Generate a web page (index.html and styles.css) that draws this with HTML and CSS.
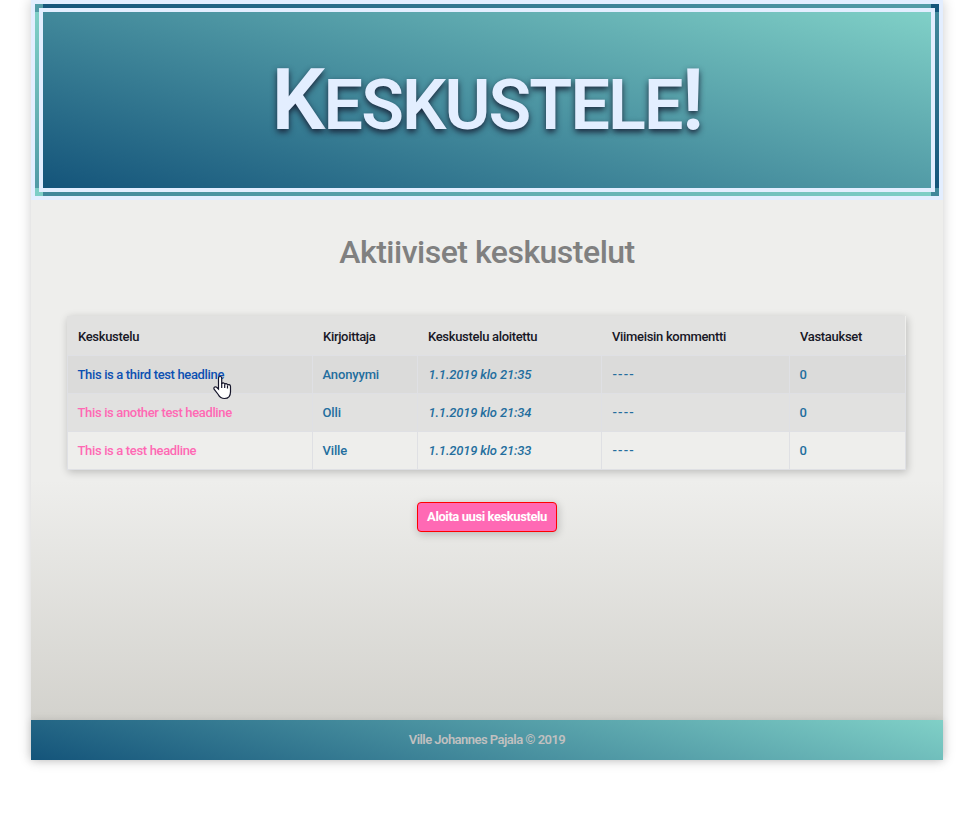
FILE: index.html
```html
<!DOCTYPE html>
<html lang="fi">
<head>
<meta charset="utf-8">
<title>Keskustele!</title>
<link rel="stylesheet" href="styles.css">
</head>
<body>
<div class="page">
  <header class="banner"><h1><span class="cap">K</span>eskustele<span class="cap">!</span></h1></header>
  <main class="content">
    <h2>Aktiiviset keskustelut</h2>
    <table class="threads">
      <colgroup><col class="c-topic"><col class="c-author"><col class="c-started"><col class="c-latest"><col class="c-replies"></colgroup>
      <thead>
        <tr><th>Keskustelu</th><th>Kirjoittaja</th><th>Keskustelu aloitettu</th><th>Viimeisin kommentti</th><th>Vastaukset</th></tr>
      </thead>
      <tbody>
        <tr class="hovered"><td class="topic pointed"><a class="active">This is a third test headline</a><svg class="pointer" width="19" height="25" viewBox="0 0 19 25"><path d="M5.5 14V3.2C5.5.9 8.7.9 8.7 3.2V9c.2-1.6 3-1.4 3 .6.3-1.4 2.8-1.2 2.8.7.5-1.2 3-.8 3 1.2v5.2c0 4-2.2 6.800-6 6.800-3.500 0-5-1.500-6.300-4L1.100 14.200C.2 12.200 2.700 11 3.900 12.500z" fill="#fff" stroke="#15152a" stroke-width="1.200"/><path d="M8.700 8v5M11.700 9.500V13M14.500 10.500V13.500" fill="none" stroke="#15152a" stroke-width="1.200"/></svg></td><td>Anonyymi</td><td class="date">1.1.2019 klo 21:35</td><td class="dash">----</td><td>0</td></tr>
        <tr class="shaded"><td class="topic"><a>This is another test headline</a></td><td>Olli</td><td class="date">1.1.2019 klo 21:34</td><td class="dash">----</td><td>0</td></tr>
        <tr><td class="topic"><a>This is a test headline</a></td><td>Ville</td><td class="date">1.1.2019 klo 21:33</td><td class="dash">----</td><td>0</td></tr>
      </tbody>
    </table>
    <button class="new-thread">Aloita uusi keskustelu</button>
  </main>
  <footer class="footer">Ville Johannes Pajala © 2019</footer>
</div>
</body>
</html>
```
FILE: styles.css
```css
* { box-sizing: border-box; }
body {
  margin: 0;
  min-height: 813px;
  background: #fff;
  font: 500 13px/18px Roboto, "Liberation Sans", sans-serif;
}
.page {
  width: 912px;
  height: 760px;
  margin: 0 32px 0 31px;
  display: flex;
  flex-direction: column;
  background: linear-gradient(#eeeeec 0, #eeeeec 480px, #d3d2cd 720px);
  box-shadow: 0 0 12px rgba(0, 0, 0, .2);
}
.banner {
  height: 200px;
  flex: none;
  display: flex;
  justify-content: center;
  align-items: center;
  border: 12px double #e3eeff;
  background: linear-gradient(15deg, #14547a, #80d0c7);
}
.banner h1 {
  margin: 0;
  padding-top: 9px;
  color: #e3eeff;
  font-size: 70px;
  line-height: 100px;
  font-weight: 600;
  letter-spacing: -1.9px;
  text-transform: uppercase;
  white-space: nowrap;
  text-shadow: 0 3px 6px #192338;
}
.cap { font-size: 85px; line-height: 1; }
.content {
  flex: 1;
  display: flex;
  flex-direction: column;
  align-items: center;
}
h2 {
  margin: 28px 0 0;
  color: #808080;
  font-size: 32px;
  line-height: 48px;
  font-weight: 500;
  letter-spacing: -.5px;
}
.threads {
  width: 838px;
  margin: 40px 2px 0 0;
  table-layout: fixed;
  border-collapse: collapse;
  box-shadow: 1px 2px 8px rgba(0, 0, 0, .22);
  letter-spacing: -.15px;
}
.c-topic { width: 245px; }
.c-author { width: 105px; }
.c-started { width: 184px; }
.c-latest { width: 188px; }
.c-replies { width: 116px; }
th, td { text-align: left; font-weight: 500; white-space: nowrap; }
th { height: 39px; padding: 4px 10px 0 11px; background: #e1e1e0; color: #171726; letter-spacing: -.32px; }
td { height: 38px; padding: 2px 10px 0; color: #246e9e; border: 1px solid #dfe0e4; position: relative; }
.hovered td { background: #dbdbda; }
.shaded td { background: #e1e1e0; }
.topic { letter-spacing: -.35px; }
.pointed { z-index: 1; }
.date { font-style: italic; padding-left: 11px; }
.dash { letter-spacing: 1.2px; padding-left: 11px; }
td a { color: #ff69b4; }
td a.active { color: #0c50b2; }
.pointer { position: absolute; left: 145px; top: 19px; }
.new-thread {
  width: 140px;
  height: 30px;
  margin-top: 32px;
  padding: 0;
  border: 1px solid #f00;
  border-radius: 4px;
  background: #ff69b4;
  color: #fff;
  font: 700 13px/18px Roboto, "Liberation Sans", sans-serif;
  letter-spacing: -.42px;
  white-space: nowrap;
  box-shadow: 1px 2px 8px rgba(0, 0, 0, .22);
}
.footer {
  height: 40px;
  display: flex;
  justify-content: center;
  align-items: center;
  color: #c0c0c0;
  font-weight: 600;
  letter-spacing: -.53px;
  background: linear-gradient(15deg, #14547a, #80d0c7);
  box-shadow: 0 0 8px rgba(0, 0, 0, .12);
}
```
